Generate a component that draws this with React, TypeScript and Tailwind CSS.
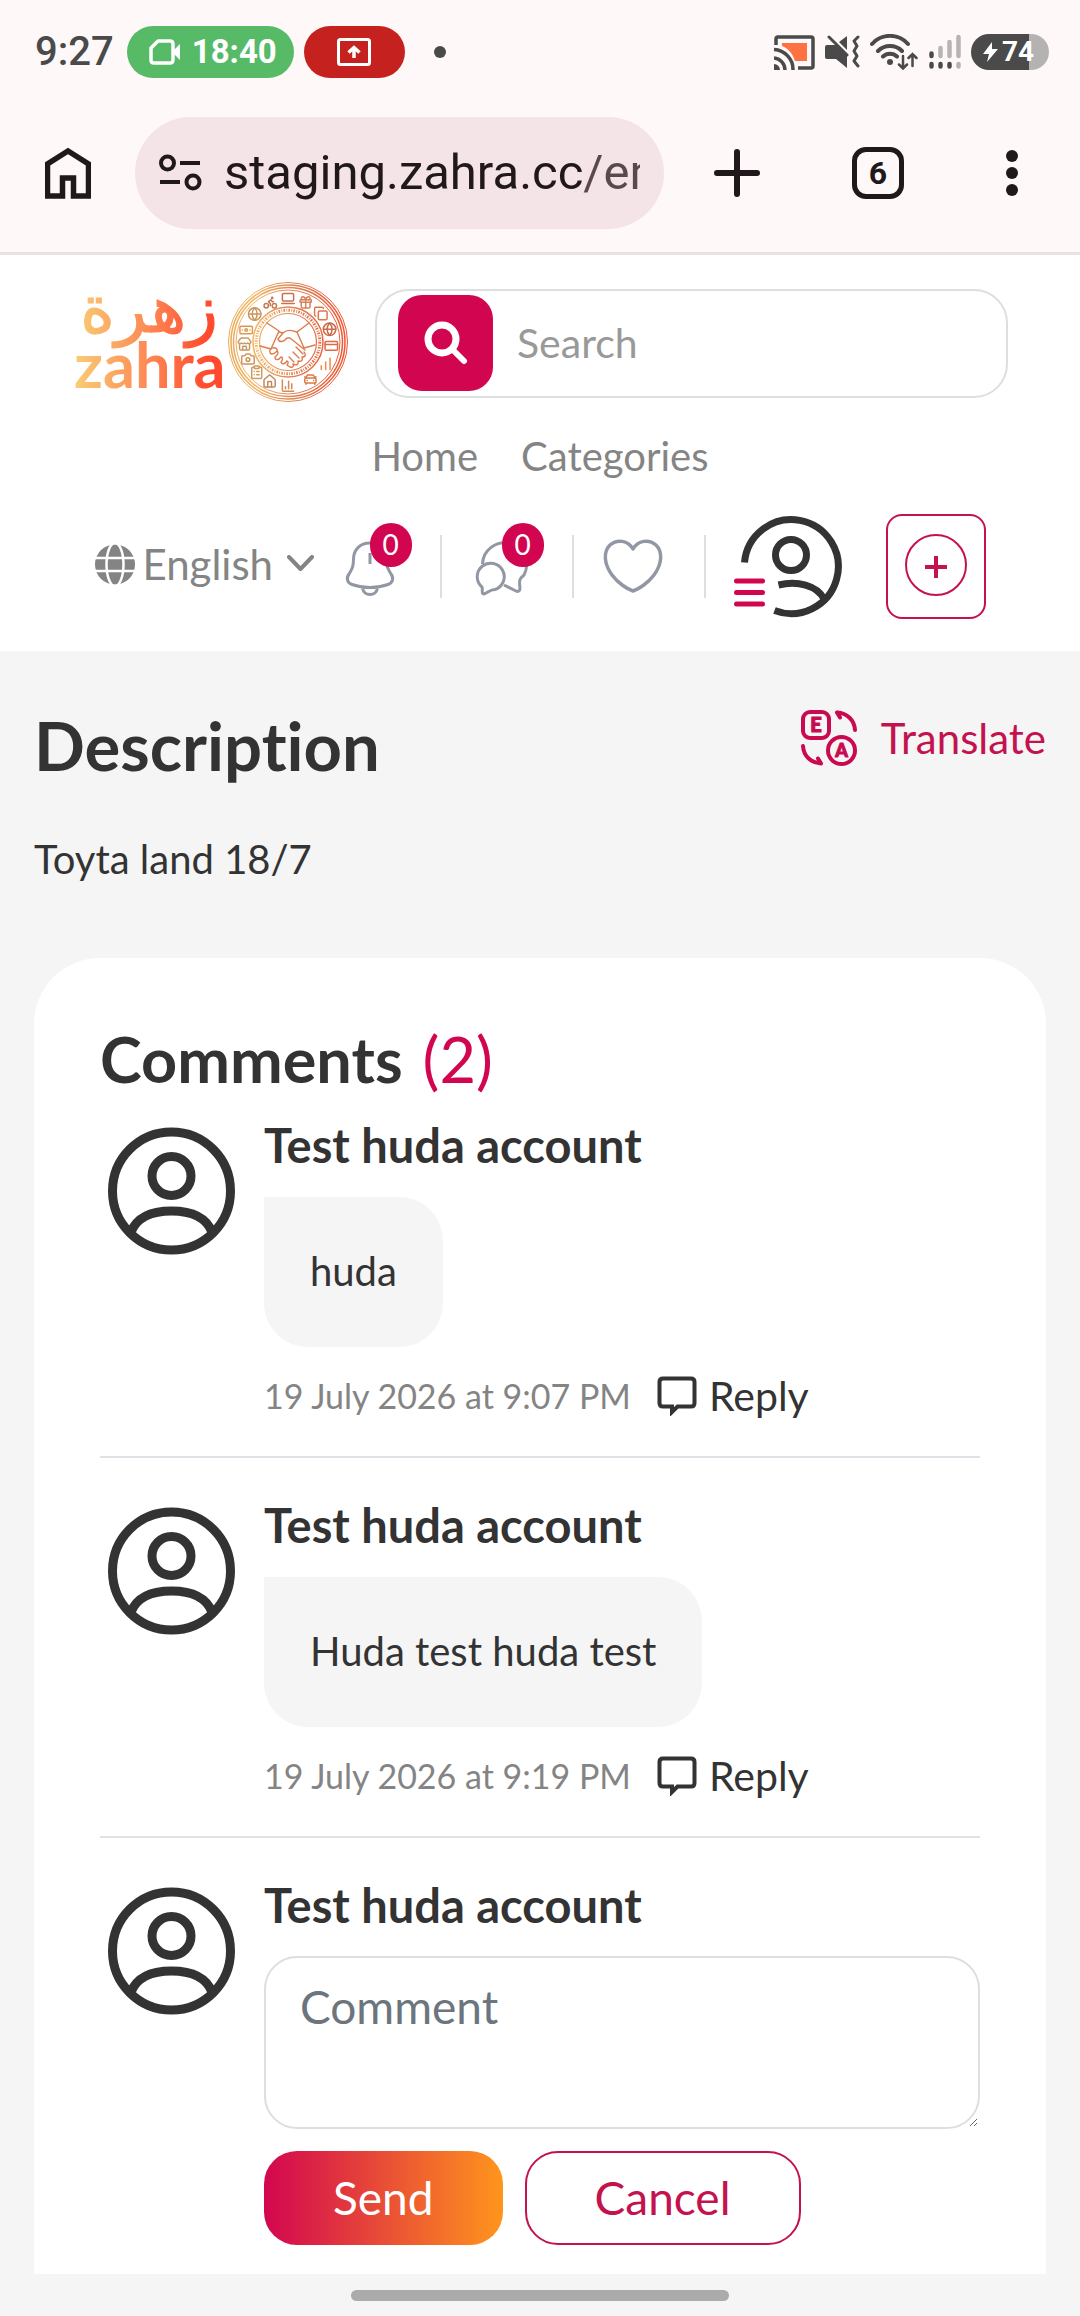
import {
  Banknote,
  Bike,
  Camera,
  CarFront,
  ChartColumn,
  ChartNoAxesColumnIncreasing,
  ClipboardList,
  Copy,
  CreditCard,
  Gift,
  Globe,
  House,
  LaptopMinimal,
  Store,
} from "lucide-react";

const comments = [
  {
    id: 1,
    author: "Test huda account",
    text: "huda",
    date: "19 July 2026 at 9:07 PM",
  },
  {
    id: 2,
    author: "Test huda account",
    text: "Huda test huda test",
    date: "19 July 2026 at 9:19 PM",
  },
];

// categories drawn around the emblem, clockwise from the top
const emblemIcons = [
  { Icon: LaptopMinimal, angle: 0, color: "#c9714f" },
  { Icon: Gift, angle: 24, color: "#d9805c" },
  { Icon: Copy, angle: 49, color: "#e0764f" },
  { Icon: Globe, angle: 73, color: "#c96a48" },
  { Icon: CreditCard, angle: 95, color: "#dd6a45" },
  { Icon: ChartNoAxesColumnIncreasing, angle: 120, color: "#f08a4a" },
  { Icon: CarFront, angle: 149, color: "#d97a45" },
  { Icon: ChartColumn, angle: 180, color: "#d58a5c" },
  { Icon: House, angle: 205, color: "#c08a62" },
  { Icon: ClipboardList, angle: 226, color: "#cf9a60" },
  { Icon: Camera, angle: 247, color: "#cf955a" },
  { Icon: Store, angle: 267, color: "#c99a62" },
  { Icon: Banknote, angle: 286, color: "#dc9a50" },
  { Icon: Globe, angle: 310, color: "#c9965c" },
  { Icon: Bike, angle: 336, color: "#c57a52" },
];

const Logo = () => (
  <svg
    width="280"
    height="130"
    viewBox="0 0 280 130"
    fill="none"
    role="img"
    aria-label="zahra"
    className="shrink-0 overflow-visible"
  >
    <defs>
      <linearGradient id="word" gradientUnits="userSpaceOnUse" x1="0" y1="0" x2="150" y2="0">
        <stop offset="0" stopColor="#f8cf76" />
        <stop offset="0.5" stopColor="#fd8a55" />
        <stop offset="0.9" stopColor="#ff4a2e" />
      </linearGradient>
      <linearGradient id="ring" gradientUnits="userSpaceOnUse" x1="156" y1="0" x2="277" y2="0">
        <stop offset="0" stopColor="#e8a855" />
        <stop offset="0.2" stopColor="#f2b866" />
        <stop offset="0.6" stopColor="#dd7a4f" />
        <stop offset="1" stopColor="#f4522f" />
      </linearGradient>
    </defs>
    <text
      x="77"
      y="54"
      textAnchor="middle"
      fontSize="66"
      fill="url(#word)"
      stroke="url(#word)"
      strokeWidth="1.2"
      className="font-['DejaVu_Sans',sans-serif]"
    >
      زهرة
    </text>
    <text
      x="2"
      y="110"
      fontSize="63"
      fontWeight="700"
      fill="url(#word)"
      className="font-[Lato,sans-serif]"
    >
      zahra
    </text>
    <g stroke="url(#ring)">
      <circle cx="216" cy="64" r="59.5" strokeWidth="1" />
      <circle cx="216" cy="64" r="57" strokeWidth="1.5" />
      <circle cx="216" cy="64" r="54.5" strokeWidth="1.5" />
      <circle cx="216" cy="64" r="52" strokeWidth="1" />
      <circle cx="216" cy="64" r="35" strokeWidth="1.5" />
      <circle cx="216" cy="64" r="28.5" strokeWidth="1.2" />
      <circle cx="216" cy="64" r="31.8" strokeWidth="3" strokeDasharray="1.6 1.4 0.8 1.2" />
    </g>
    {emblemIcons.map(({ Icon, angle, color }) => (
      <Icon
        key={angle}
        x={216 + 43.5 * Math.sin((angle * Math.PI) / 180) - 7.5}
        y={64 - 43.5 * Math.cos((angle * Math.PI) / 180) - 7.5}
        size={15}
        color={color}
        strokeWidth={2.4}
      />
    ))}
    <g
      stroke="#dc7c4c"
      strokeWidth="1.4"
      strokeLinecap="round"
      strokeLinejoin="round"
    >
      <path d="M195 45l12 8-8 18-11-3" />
      <path d="M237 45l-12 9 7 16 11-3" />
      <path d="M207 54l4 1c4-4 9-3 14-1M211 55l-5 6c1 4 6 3 9-1l3 0 15 12" />
      <path d="M200 70c-3 2-3 5 0 6 3 0 4-2 5-3 2 1 1 4-2 6 0 3 3 4 6 0 2 0 2 3 0 5 1 3 4 2 6-1 2 1 1 3 0 4l3 2c3 1 4-1 3-3 4 2 6 0 5-3 4 1 5-1 4-4 4 0 4-3 2-5" />
      <path d="M217 79l5 5M221 74l6 6M224 69l7 7M205 73c1-2-2-4-4-3" />
    </g>
  </svg>
);

const UserIcon = () => (
  <svg
    width="128"
    height="128"
    viewBox="0 0 128 128"
    fill="none"
    stroke="#333333"
    strokeWidth="9"
    className="ml-2 mt-[10px] shrink-0"
  >
    <circle cx="63.500" cy="64" r="59" />
    <circle cx="63.500" cy="49" r="19.500" />
    <path d="M23 105C29 90 43 84 63.500 84S98 90 104 105" />
  </svg>
);

const StatusBar = () => (
  <div className="flex items-center pb-[39px] pl-[35px] pr-[31px] pt-[26px] font-[Roboto,sans-serif]">
    <p className="text-[40px] font-medium leading-[52px] text-[#4a4a4a]">
      9:27
    </p>
    <div className="ml-[13px] flex items-center gap-3 rounded-full bg-[#57ba67] pl-[22px] pr-[17px] text-[33px] font-bold leading-[52px] text-white">
      <svg width="31" height="26" viewBox="0 0 31 26" fill="none">
        <path
          d="M9 2h12q3 0 3 3v16q0 3-3 3H5q-3 0-3-3V9z"
          stroke="white"
          strokeWidth="3.5"
          strokeLinejoin="round"
        />
        <path d="M24 12l7-7v16l-7-7z" fill="white" />
      </svg>
      18:40
    </div>
    <div className="ml-[10px] flex h-[52px] w-[101px] items-center justify-center rounded-full bg-[#c5221f]">
      <svg width="34" height="28" viewBox="0 0 34 28" fill="none" stroke="white">
        <rect x="1.5" y="1.5" width="31" height="25" rx="2" strokeWidth="3" />
        <path d="M17 20V10M11.5 14.500l5.500-5 5.500 5" strokeWidth="3.500" />
      </svg>
    </div>
    <div className="ml-[29px] size-3 rounded-full bg-[#4a4a4a]" />

    <div className="ml-auto flex items-center gap-[10px]">
      <svg width="41" height="35" viewBox="0 0 41 35" fill="none">
        <path
          d="M2 10V4q0-2 2-2h33q2 0 2 2v27q0 2-2 2H24"
          stroke="#4a4a4a"
          strokeWidth="3.5"
        />
        <path d="M8 8h25v18H21C19 19 14 13 8 11z" fill="#ff7043" />
        <path
          d="M0 14.500A20 20 0 0 1 19 35M0 23a12 12 0 0 1 11 12"
          stroke="#4a4a4a"
          strokeWidth="3.500"
        />
        <path d="M0 29a6 6 0 0 1 6 6H0z" fill="#4a4a4a" />
      </svg>
      <svg width="35" height="34" viewBox="0 0 35 34" fill="none">
        <path
          d="M2 10h9l11 11v12L11 24H2q-2 0-2-2V12q0-2 2-2zM22 1v14l-8-8z"
          fill="#4a4a4a"
        />
        <path
          d="M4 2l18 18M33 2l-4 4 3 5-3 5 3 5-3 5 4 5"
          stroke="#4a4a4a"
          strokeWidth="3"
          strokeLinecap="round"
          strokeLinejoin="round"
        />
      </svg>
      <svg
        width="49"
        height="36"
        viewBox="0 0 49 36"
        fill="none"
        stroke="#4a4a4a"
        strokeLinecap="round"
      >
        <path
          d="M2 10A24 24 0 0 1 38 10M8 17A17 17 0 0 1 32 17M13 22.500a10 10 0 0 1 14 0"
          strokeWidth="4"
        />
        <circle cx="20" cy="28" r="3" fill="#4a4a4a" stroke="none" />
        <path
          d="M33 22v12M29 30.500l4 4 4-4M42.500 32V20M38.500 24l4-4 4 4"
          strokeWidth="2.500"
        />
      </svg>
      <svg
        width="32"
        height="36"
        viewBox="0 0 32 36"
        strokeWidth="4.500"
        strokeLinecap="round"
      >
        <path
          d="M2.500 19.500v2.500M2.500 30v2.500M11.500 30v2.500M20.500 30v2.500"
          stroke="#4a4a4a"
        />
        <path d="M11.500 14v8M20.500 8v14M29.500 3v19M29.500 30v2.500" stroke="#b8b4b4" />
      </svg>
      <div className="flex h-9 w-[78px] items-center gap-1 rounded-full bg-[linear-gradient(to_right,#4a4a4a_74%,#b5b2b2_74%)] pl-3 text-[28px] font-bold leading-none text-white">
        <svg width="15" height="20" viewBox="0 0 15 20" fill="white">
          <path d="M9 0L0 12h6l-2 8L15 7H9z" />
        </svg>
        74
      </div>
    </div>
  </div>
);

const BrowserToolbar = () => (
  <div className="flex items-center pb-[23px] pl-[45px] pr-[62px] font-[Roboto,sans-serif] text-[#20181b]">
    <button aria-label="Home page">
      <svg width="46" height="52" viewBox="0 0 46 52" fill="none">
        <path
          d="M2.500 49V17L23 4l20.500 13v32H28.500V31h-11v18z"
          stroke="currentColor"
          strokeWidth="5.500"
        />
      </svg>
    </button>
    <div className="ml-11 flex h-28 min-w-0 flex-1 items-center rounded-full bg-[#f4e4e7] pl-6 pr-6">
      <svg
        width="43"
        height="38"
        viewBox="0 0 43 38"
        fill="none"
        stroke="currentColor"
        strokeWidth="4"
        className="shrink-0"
      >
        <circle cx="8.500" cy="9" r="6.500" />
        <path d="M21 9h20M1 28h20" />
        <circle cx="34" cy="28" r="6.500" />
      </svg>
      <input
        aria-label="Address"
        defaultValue="staging.zahra.cc/en"
        className="ml-[22px] w-0 flex-1 bg-[linear-gradient(to_right,#20181b_359px,#5a484d_359px)] bg-clip-text text-[49px] text-transparent outline-none"
      />
    </div>
    <button aria-label="New tab" className="ml-[50px]">
      <svg width="46" height="48" viewBox="0 0 46 48">
        <path
          d="M3 24h40M23 3v42"
          stroke="currentColor"
          strokeWidth="6"
          strokeLinecap="round"
        />
      </svg>
    </button>
    <button
      aria-label="Open tabs"
      className="ml-[92px] flex h-[52px] w-[52px] items-center justify-center rounded-[14px] border-[5px] border-current text-[32px] font-bold leading-none"
    >
      6
    </button>
    <button
      aria-label="Browser menu"
      className="ml-[102px] flex flex-col gap-[5px]"
    >
      <span className="size-3 rounded-full bg-current" />
      <span className="size-3 rounded-full bg-current" />
      <span className="size-3 rounded-full bg-current" />
    </button>
  </div>
);

const Badge = ({ count }: { count: number }) => (
  <span className="absolute -top-[12px] left-8 flex h-11 w-[42px] items-center justify-center rounded-full bg-[#d20650] pb-[2px] text-[28px] leading-none text-white">
    {count}
  </span>
);

const Divider = () => (
  <div className="ml-[38px] mr-7 h-[63px] w-[2px] bg-[#dedede]" />
);

const Header = () => (
  <header className="bg-white pb-8 pt-[23px] text-[40px] text-[#848484]">
    <div className="flex items-center px-[72px]">
      <a href="#home">
        <Logo />
      </a>
      <form className="ml-[23px] flex h-[109px] flex-1 items-center rounded-[34px] border-2 border-[#dedede] pl-[21px] pr-6">
        <button
          type="button"
          aria-label="Submit search"
          className="flex h-24 w-[95px] shrink-0 items-center justify-center rounded-[24px] bg-[#d20650]"
        >
          <svg width="44" height="44" viewBox="0 0 44 44" fill="none">
            <circle cx="18" cy="18" r="14" stroke="white" strokeWidth="7" />
            <path
              d="M28 28l12 12"
              stroke="white"
              strokeWidth="6"
              strokeLinecap="round"
            />
          </svg>
        </button>
        <input
          aria-label="Search"
          placeholder="Search"
          className="ml-6 w-0 flex-1 text-[41px] outline-none placeholder:text-[#999999]"
        />
      </form>
    </div>

    <nav className="mt-5 flex justify-center gap-[43px] leading-[56px]">
      <a href="#home">Home</a>
      <a href="#categories">Categories</a>
    </nav>

    <div className="mt-[30px] flex items-center justify-center">
      <div className="flex items-center gap-2 pb-1">
        <svg
          width="40"
          height="41"
          viewBox="0 0 40 41"
          fill="none"
          stroke="white"
          strokeWidth="2.500"
        >
          <circle cx="20" cy="20.500" r="20" fill="#848484" stroke="none" />
          <ellipse cx="20" cy="20.500" rx="8.500" ry="21.500" />
          <path d="M0 14h40M0 27h40" />
        </svg>
        <div className="relative">
          <select
            aria-label="Language"
            className="appearance-none bg-transparent pr-10 text-[42px] leading-[56px] outline-none"
          >
            <option>English</option>
          </select>
          <svg
            width="27"
            height="17"
            viewBox="0 0 27 17"
            fill="none"
            className="pointer-events-none absolute right-0 top-5"
          >
            <path
              d="M2 2l11.500 12L25 2"
              stroke="#848484"
              strokeWidth="4"
              strokeLinecap="round"
              strokeLinejoin="round"
            />
          </svg>
        </div>
      </div>

      <button aria-label="Notifications" className="relative ml-6">
        <svg
          width="64"
          height="64"
          viewBox="0 2 64 64"
          fill="none"
          stroke="#9198a3"
          strokeWidth="3"
        >
          <path d="M32 10C22 10 15.500 17 15.500 26c0 8-1.500 10-4.500 15-3 4-2 9 3 10.500 11 4 25 4 36 0 5-1.500 6-6.500 3-10.500-3-5-4.500-7-4.500-15C48.500 17 42 10 32 10z" />
          <path d="M24.500 55.500c2 8 13 8 15 0M32 20v11" />
        </svg>
        <Badge count={0} />
      </button>
      <Divider />
      <button aria-label="Messages" className="relative">
        <svg
          width="64"
          height="64"
          viewBox="0 2 64 64"
          fill="none"
          stroke="#9198a3"
          strokeWidth="3"
          strokeLinejoin="round"
        >
          <path d="M12.500 31A22 22 0 1 1 54 42c-5 4-5 6-4 13 0 3-2 4-4 3l-12-6" />
          <path d="M12 54A13.500 13.500 0 1 1 25 56.500c-5 0-7 3-11 4.500-3 0-1-4-2-7z" />
        </svg>
        <Badge count={0} />
      </button>
      <Divider />
      <button aria-label="Favourites">
        <svg
          width="64"
          height="64"
          viewBox="0 2 64 64"
          fill="none"
          stroke="#9198a3"
          strokeWidth="3.500"
          strokeLinejoin="round"
        >
          <path d="M31 16C26 7 15 6 8 12 1 19 2 31 10 42c6 8 15 14 21 16 6-2 15-8 21-16 8-11 9-23 2-30-7-6-18-5-23 4z" />
        </svg>
      </button>
      <Divider />
      <button aria-label="Account menu">
        <svg width="110" height="102" viewBox="1 0 110 102" fill="none">
          <g stroke="#333333" strokeWidth="7">
            <path d="M11.500 46.500A47 47 0 1 1 41.500 94.500" />
            <circle cx="58" cy="39" r="15.500" />
            <path d="M45.500 69C64 64.500 84 69 91 83" />
          </g>
          <path
            d="M3.500 65h26M3.500 76.500h26M3.500 88h26"
            stroke="#d20650"
            strokeWidth="5"
            strokeLinecap="round"
          />
        </svg>
      </button>
      <button
        aria-label="Add listing"
        className="ml-[42px] flex h-[105px] w-[100px] items-center justify-center rounded-2xl border-2 border-[#c4124f] pb-1"
      >
        <svg
          width="62"
          height="62"
          viewBox="0 0 62 62"
          fill="none"
          stroke="#c4124f"
        >
          <circle cx="31" cy="31" r="30" strokeWidth="2" />
          <path d="M20 33h22M31 22v22" strokeWidth="4" />
        </svg>
      </button>
    </div>
  </header>
);

const CommentItem = ({ item }: { item: (typeof comments)[number] }) => (
  <li className="mb-[39px] flex gap-7 border-b-2 border-[#dee2e6] pb-8">
    <UserIcon />
    <div className="flex flex-col items-start">
      <h3 className="text-[47px] font-bold leading-[56px]">{item.author}</h3>
      <p className="mt-6 rounded-[44px] rounded-tl-none bg-[#f5f5f5] px-[46px] pb-[48px] pt-[46px] text-[40px] leading-[56px]">
        {item.text}
      </p>
      <div className="mt-[21px] flex items-center leading-[56px]">
        <span className="text-[34px] text-[#848484]">{item.date}</span>
        <button className="ml-[26px] flex items-center gap-3 text-[41px]">
          <svg
            width="40"
            height="40"
            viewBox="0 0 40 40"
            fill="none"
            stroke="#333333"
            strokeWidth="4"
          >
            <path d="M6 2.500h28q3.500 0 3.500 3.500v21q0 3.500-3.500 3.500H20.500L15 36v-5.500H6q-3.500 0-3.500-3.500V6Q2.500 2.500 6 2.500z" />
          </svg>
          Reply
        </button>
      </div>
    </div>
  </li>
);

const Comments = () => (
  <section className="mt-[71px] rounded-t-[66px] bg-white px-[66px] pb-[29px] pt-[65px]">
    <h2 className="flex gap-5 text-[63px] font-bold leading-[72px]">
      Comments
      <span className="font-normal text-[#d20650]">(2)</span>
    </h2>
    <ul className="mt-[22px]">
      {comments.map((item) => (
        <CommentItem key={item.id} item={item} />
      ))}
    </ul>
    <form className="flex gap-7">
      <UserIcon />
      <div className="flex-1">
        <label
          htmlFor="comment"
          className="block text-[47px] font-bold leading-[56px]"
        >
          Test huda account
        </label>
        <textarea
          id="comment"
          rows={2}
          placeholder="Comment"
          className="mt-[23px] block w-full rounded-[33px] border-2 border-[#dedede] px-[34px] pb-[21px] pt-4 text-[46px] leading-[66px] outline-none placeholder:text-[#6c757d]"
        />
        <div className="mt-[22px] flex gap-[22px] text-[46px] leading-[90px]">
          <button
            type="button"
            className="rounded-[33px] bg-[linear-gradient(to_right,#d20650,#ff951c)] px-[69px] py-[2px] text-white"
          >
            Send
          </button>
          <button
            type="button"
            className="rounded-[33px] border-2 border-[#c4124f] px-[68px] text-[#c4124f]"
          >
            Cancel
          </button>
        </div>
      </div>
    </form>
  </section>
);

const App = () => {
  return (
    <div className="bg-[#f5f5f5] font-[Lato,sans-serif] text-[#333333] [font-variant-ligatures:none]">
      <div className="border-b-[3px] border-[#ede0e2] bg-[#fff8f8]">
        <StatusBar />
        <BrowserToolbar />
      </div>
      <Header />
      <main className="px-[34px] pt-[54px]">
        <div className="flex items-start justify-between">
          <h1 className="text-[67px] font-bold leading-[80px]">Description</h1>
          <button className="mt-[5px] flex items-center gap-6 text-[42px] leading-[56px] text-[#c4124f]">
            <svg
              width="56"
              height="56"
              viewBox="0 0 56 56"
              fill="none"
              stroke="#c90a50"
              strokeWidth="4"
              strokeLinecap="round"
              strokeLinejoin="round"
            >
              <rect x="2" y="2" width="26" height="26" rx="7" />
              <circle cx="40.500" cy="40.500" r="13.500" />
              <path d="M36 2.500C46 3 53.500 10 54 20M36 2.500l3 5M2 36c.5 10 8 17 18 17.500M20 53.500l-3-5" />
              <g
                fill="#c90a50"
                strokeWidth="1"
                textAnchor="middle"
                fontWeight="900"
              >
                <text x="15" y="22" fontSize="20">
                  E
                </text>
                <text x="40.500" y="47" fontSize="18">
                  A
                </text>
              </g>
            </svg>
            Translate
          </button>
        </div>
        <p className="mt-[46px] text-[40px] leading-[56px]">Toyta land 18/7</p>
        <Comments />
      </main>
      {/* gesture bar */}
      <div className="flex justify-center pb-[15px] pt-4">
        <div className="h-[11px] w-[35%] rounded-full bg-[#ababab]" />
      </div>
    </div>
  );
};

export default App;
